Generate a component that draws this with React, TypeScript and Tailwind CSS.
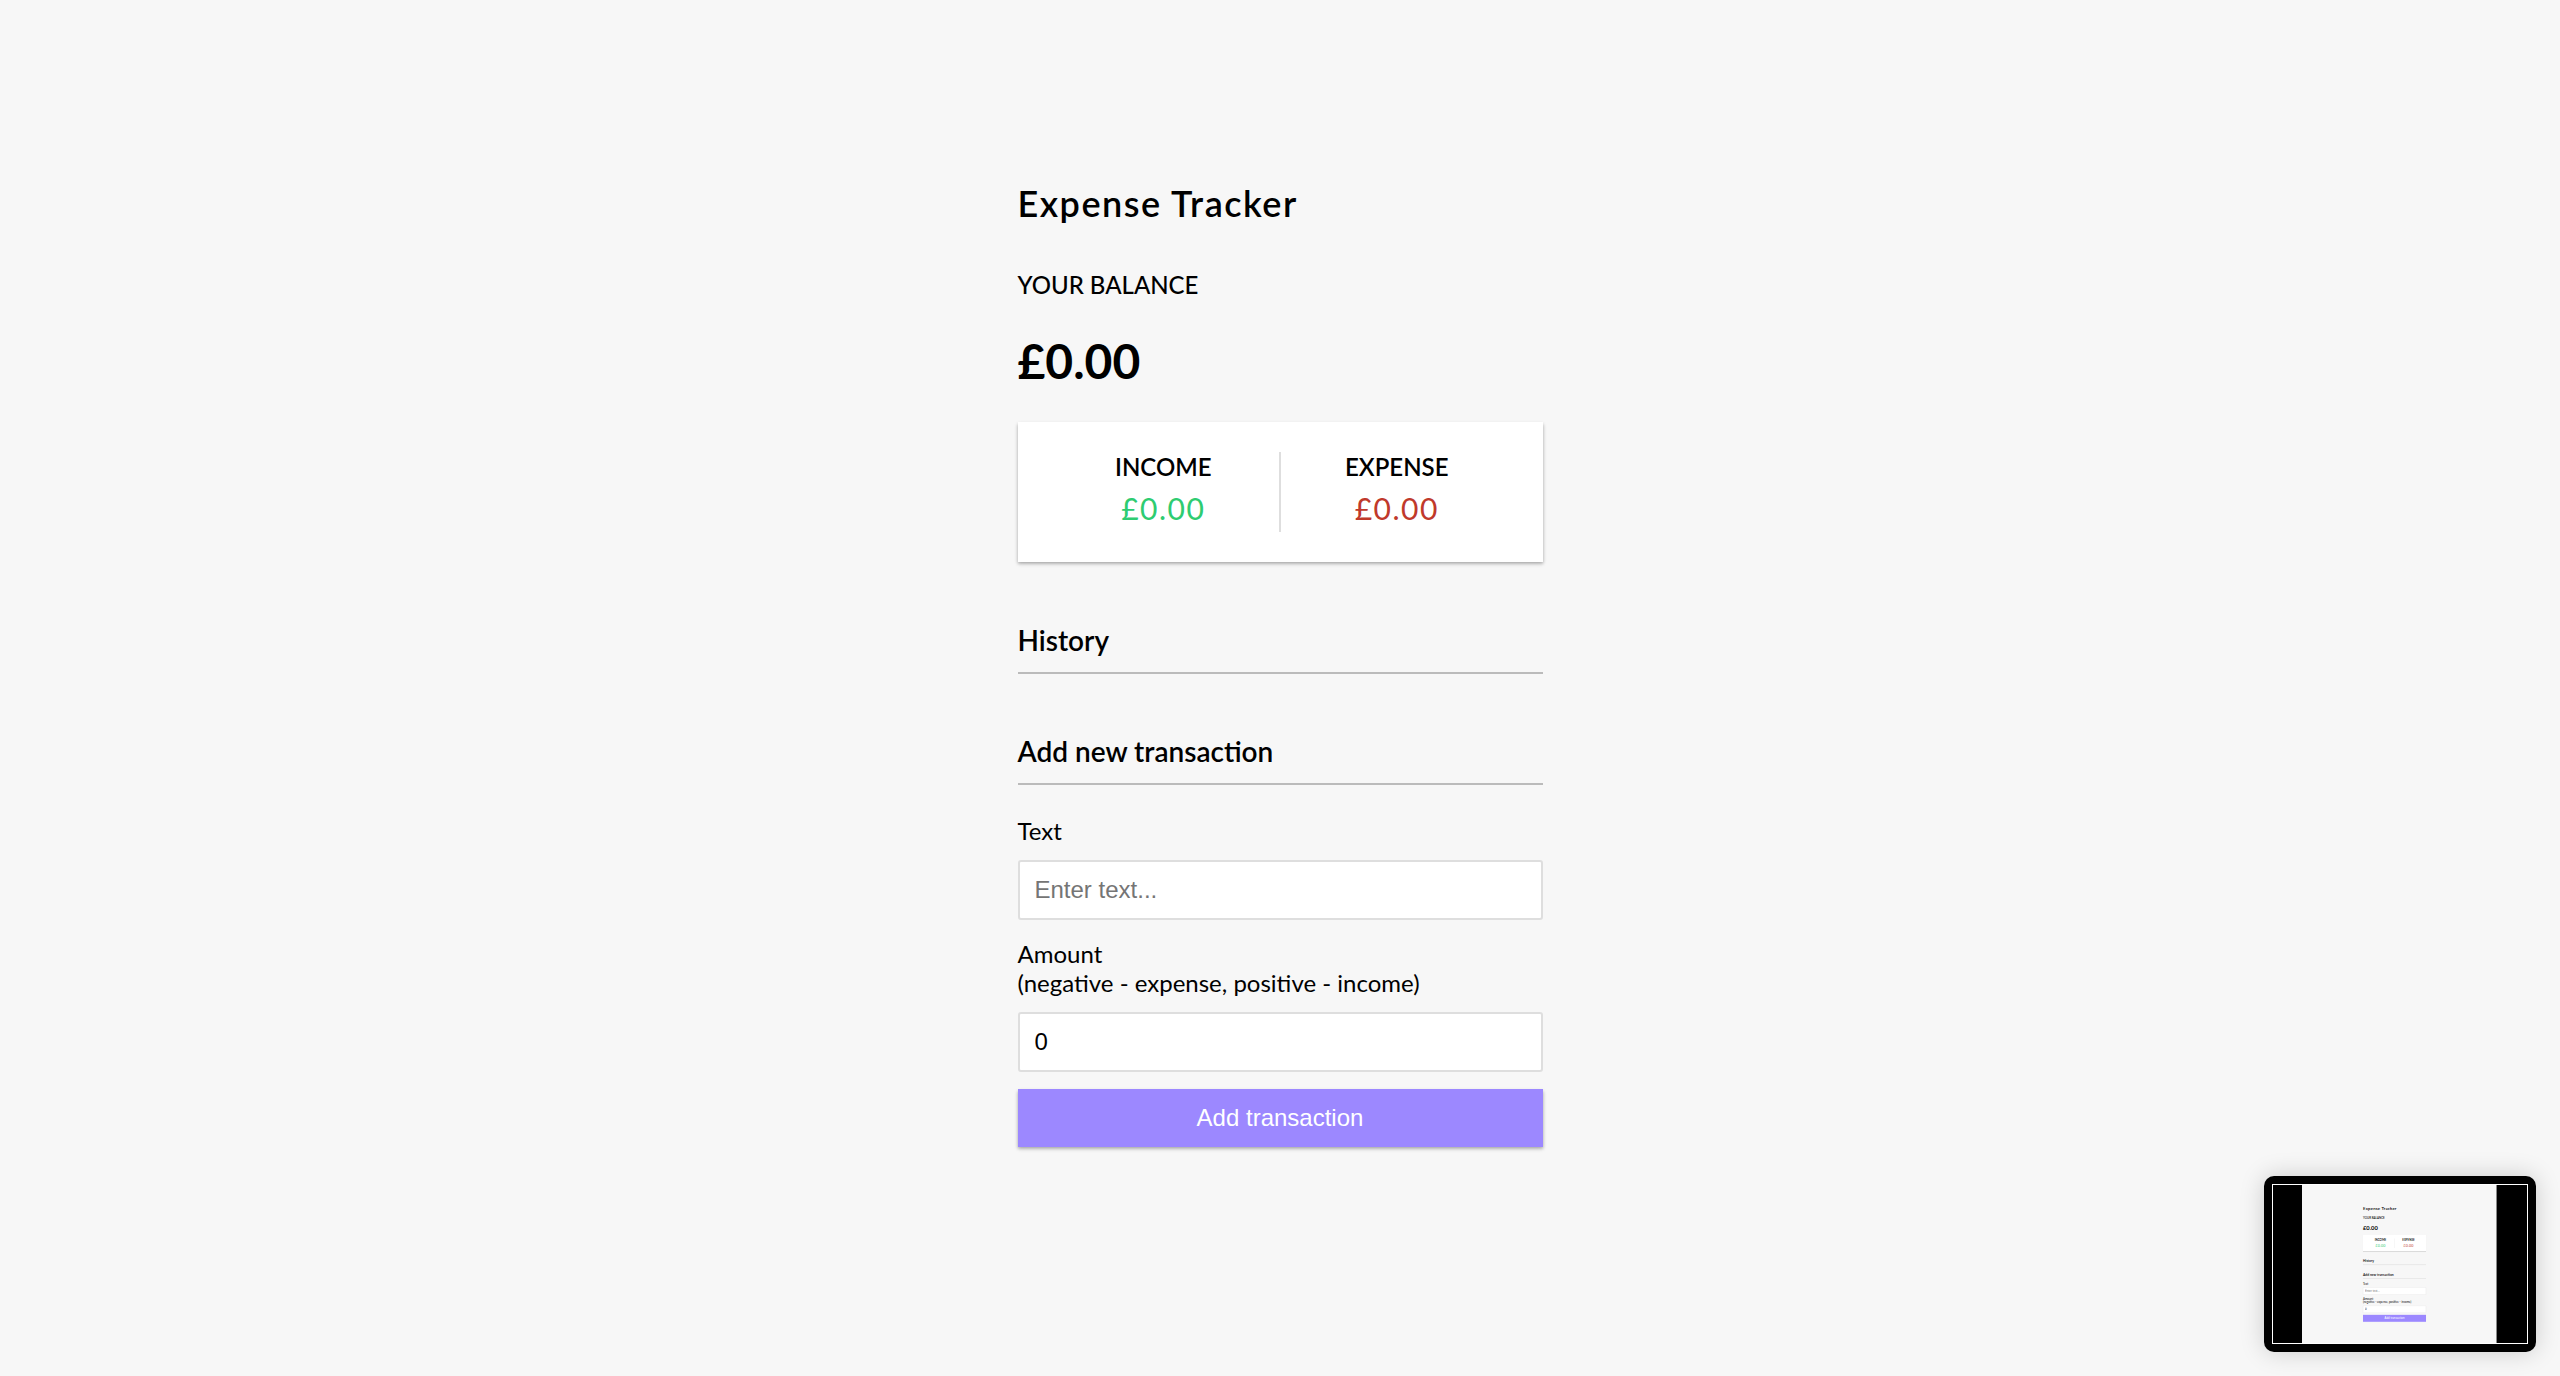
import React from "react";

const cardShadow =
	"shadow-[0_1.5px_4.5px_rgba(0,0,0,0.12),0_1.5px_3px_rgba(0,0,0,0.24)]";

function Tracker() {
	return (
		<div className="w-[525px] font-['Lato',sans-serif] text-black">
			<h2 className="text-[36px] leading-[43px] font-semibold tracking-[1.5px]">
				Expense Tracker
			</h2>

			<h4 className="mt-[45px] text-[24px] leading-[29px] font-medium uppercase">
				Your Balance
			</h4>
			<h1 className="mt-[33px] text-[48px] leading-[58px] font-bold">£0.00</h1>

			{/* income / expense */}
			<div className={`mt-[32px] flex bg-white p-[30px] ${cardShadow}`}>
				<div className="flex-1 border-r-2 border-[#dedede] text-center">
					<h4 className="text-[24px] leading-[29px] font-semibold uppercase">Income</h4>
					<p className="mt-[9px] mb-[6px] text-[30px] leading-[36px] tracking-[1.5px] text-[#2ecc71]">
						£0.00
					</p>
				</div>
				<div className="flex-1 text-center">
					<h4 className="text-[24px] leading-[29px] font-semibold uppercase">Expense</h4>
					<p className="mt-[9px] mb-[6px] text-[30px] leading-[36px] tracking-[1.5px] text-[#c0392b]">
						£0.00
					</p>
				</div>
			</div>

			<h3 className="mt-[61px] border-b-2 border-[#bbb] pb-[15px] text-[28px] leading-[34px] font-semibold">
				History
			</h3>

			<h3 className="mt-[60px] border-b-2 border-[#bbb] pb-[15px] text-[28px] leading-[34px] font-semibold">
				Add new transaction
			</h3>

			<form onSubmit={(e) => e.preventDefault()}>
				<label className="mt-[31px] mb-[15px] block text-[24px] leading-[29px]">Text</label>
				<input
					type="text"
					placeholder="Enter text..."
					className="block h-[60px] w-full rounded-[3px] border-2 border-[#dedede] bg-white px-[15px] font-['Liberation_Sans',Arial,sans-serif] text-[24px] text-black outline-none placeholder:text-[#757575]"
				/>

				<label className="mt-[19px] mb-[15px] block text-[24px] leading-[29px]">
					Amount <br />
					(negative - expense, positive - income)
				</label>
				<input
					type="number"
					defaultValue={0}
					className="block h-[60px] w-full rounded-[3px] border-2 border-[#dedede] bg-white px-[15px] font-['Liberation_Sans',Arial,sans-serif] text-[24px] text-black outline-none"
				/>

				<button
					className={`mt-[17px] block h-[58px] w-full bg-[#9c88ff] font-['Liberation_Sans',Arial,sans-serif] text-[24px] text-white ${cardShadow}`}
				>
					Add transaction
				</button>
			</form>
		</div>
	);
}

export default function App() {
	return (
		<div className="relative min-h-screen overflow-hidden bg-[#f7f7f7]">
			<main className="flex justify-center pt-[182px]">
				<Tracker />
			</main>

			{/* screenshot preview thumbnail */}
			<div className="absolute left-[2264px] top-[1176px] h-[176px] w-[272px] rounded-[10px] bg-black p-[8px] shadow-[0_0_24px_rgba(0,0,0,0.18)]">
				<div className="flex h-full w-full border border-white bg-black">
					<div className="relative ml-[29px] h-full w-[195px] overflow-hidden border-r border-[#888] bg-[#f7f7f7]">
						<div className="absolute left-[61px] top-[21px] origin-top-left scale-[0.12]">
							<Tracker />
						</div>
					</div>
				</div>
			</div>
		</div>
	);
}
